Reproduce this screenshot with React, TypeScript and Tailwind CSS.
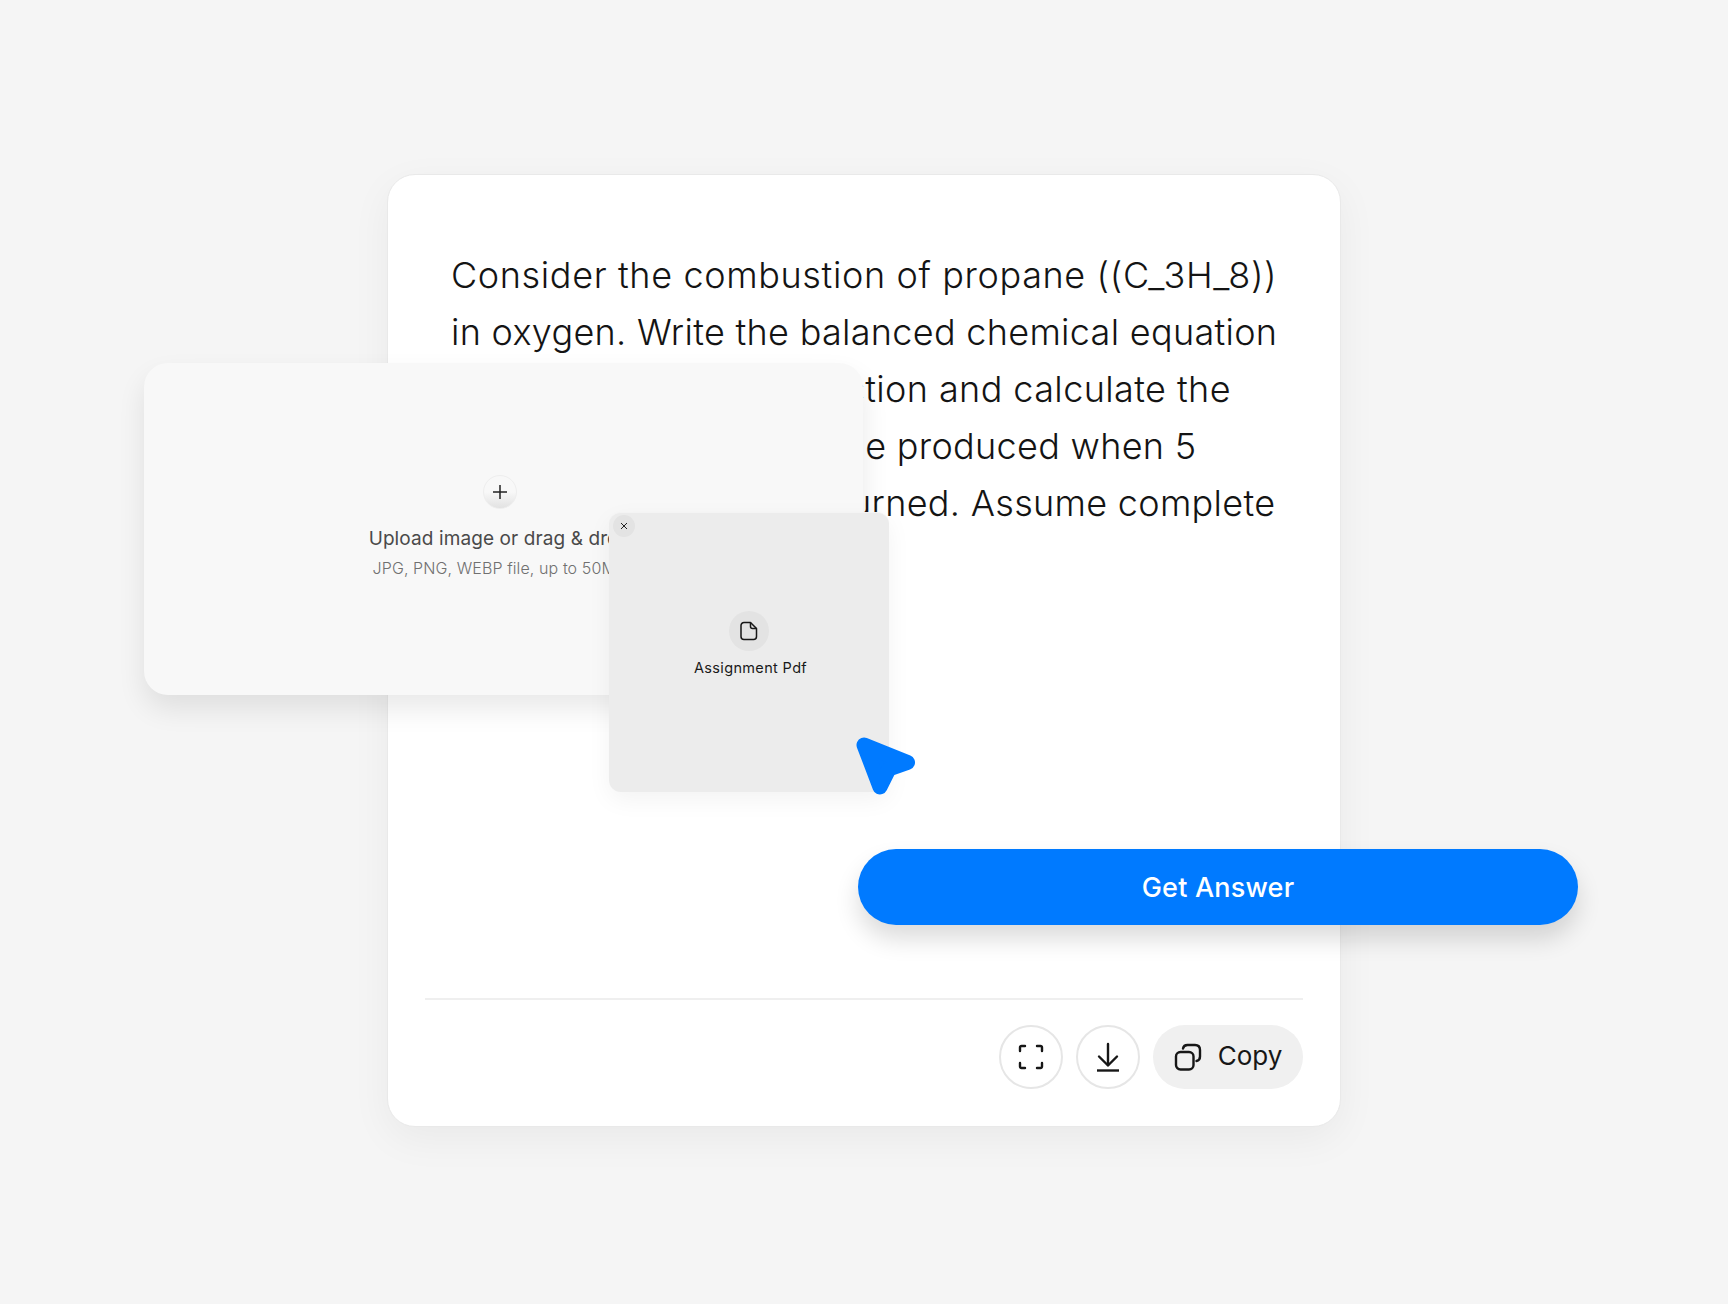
import React from "react";

const inter = "font-['Inter','Liberation_Sans',sans-serif]";

export default function App() {
  return (
    <div className={`w-full h-[1304px] bg-[#f5f5f5] flex justify-center items-start pt-[174px] overflow-hidden ${inter}`}>
      <div className="relative w-[954px] h-[953px] bg-white rounded-[28px] border border-[#e9e9e9] shadow-[0_12px_40px_rgba(0,0,0,0.05)] flex flex-col justify-between">
        <div className="pt-[72px] pl-[63px] text-[36px] leading-[57px] font-light tracking-[0.3px] text-[#141414] whitespace-nowrap">
          <p className="tracking-[0.63px]">Consider the combustion of propane ((C_3H_8))</p>
          <p>in oxygen. Write the balanced chemical equation</p>
          <p className="tracking-[0.4px]">for this combustion reaction and calculate the</p>
          <p>amount of carbon dioxide produced when 5</p>
          <p>grams of propane are burned. Assume complete</p>
        </div>

        <div className="mx-[37px] mb-[37px] border-t-2 border-[#efefef] pt-[25px] flex justify-end gap-[13px]">
          <button className="w-[64px] h-[64px] rounded-full border-2 border-[#e6e6e6] flex items-center justify-center">
            <svg width="28" height="28" viewBox="0 0 28 28" fill="none" stroke="#171717" strokeWidth="2.4" strokeLinecap="round" strokeLinejoin="round">
              <path d="M8 3H4.5A1.5 1.5 0 0 0 3 4.5V8" />
              <path d="M20 3h3.5A1.5 1.5 0 0 1 25 4.5V8" />
              <path d="M3 20v3.500A1.500 1.500 0 0 0 4.500 25H8" />
              <path d="M25 20v3.500A1.500 1.500 0 0 1 23.500 25H20" />
            </svg>
          </button>
          <button className="w-[64px] h-[64px] rounded-full border-2 border-[#e6e6e6] flex items-center justify-center">
            <svg width="28" height="30" viewBox="0 0 28 30" fill="none" stroke="#171717" strokeWidth="2.4" strokeLinecap="round" strokeLinejoin="round">
              <path d="M14 2v21" />
              <path d="M5 14.500l9 9 9-9" />
              <path d="M3 28.500h22" strokeLinecap="butt" />
            </svg>
          </button>
          <button className="w-[150px] h-[64px] rounded-full bg-[#f0f0f0] flex items-center justify-center gap-[16px] text-[26px] leading-[60px] pb-[2px] font-normal text-[#171717]">
            <svg className="mt-[2px]" width="28" height="28" viewBox="0 0 28 28" fill="none" stroke="#171717" strokeWidth="2.400" strokeLinecap="round" strokeLinejoin="round">
              <rect x="2" y="9" width="17.500" height="17.500" rx="4.500" />
              <path d="M9 5.500C9.500 3 11 2 13.500 2h7.500C24 2 26 4 26 7v6.500c0 2.500-1 4-3.500 4.500" />
            </svg>
            Copy
          </button>
        </div>

        {/* upload card */}
        <div className="absolute left-[-244px] top-[188px] w-[719px] h-[332px] bg-[#f8f8f8] rounded-[24px] shadow-[0_14px_28px_rgba(0,0,0,0.09)] flex flex-col items-center pt-[112px] pr-[8px]">
          <div className="w-[34px] h-[34px] rounded-full bg-[linear-gradient(#f8f8f8_50%,#e2e2e2)] border border-[#eeeeee] flex items-center justify-center">
            <svg width="16" height="16" viewBox="0 0 16 16" stroke="#222" strokeWidth="1.500">
              <path d="M8 1v14M1 8h14" />
            </svg>
          </div>
          <p className="mt-[17px] text-[19px] leading-[26px] tracking-[0.1px] font-normal text-[#4a4a4a] whitespace-nowrap">Upload image or drag &amp; drop</p>
          <p className="mt-[5px] text-[16px] leading-[22px] tracking-[0.1px] font-light text-[#707070] whitespace-nowrap">JPG, PNG, WEBP file, up to 50MB</p>
        </div>

        {/* file card */}
        <div className="absolute left-[221px] top-[337px] w-[280px] h-[280px] bg-[#ececec] rounded-[12px] border-t border-[#f4f4f4] shadow-[0_8px_24px_rgba(0,0,0,0.05)] flex flex-col items-center pt-[98px]">
          <div className="absolute left-[4px] top-[2px] w-[22px] h-[22px] rounded-full bg-[#e3e3e3] flex items-center justify-center">
            <svg width="8" height="8" viewBox="0 0 8 8" stroke="#222" strokeWidth="1">
              <path d="M1 1l6 6M7 1L1 7" />
            </svg>
          </div>
          <div className="w-[40px] h-[40px] rounded-full bg-[#e3e3e3] flex items-center justify-center">
            <svg width="18" height="20" viewBox="0 0 18 20" fill="none" stroke="#171717" strokeWidth="1.500" strokeLinejoin="round">
              <path d="M4 1.500h6.500L16.500 7.500V15.500a3 3 0 0 1-3 3H4a3 3 0 0 1-3-3V4.500a3 3 0 0 1 3-3z" />
              <path d="M10.500 1.500V5.500a2 2 0 0 0 2 2h4" />
            </svg>
          </div>
          <p className="mt-[7px] ml-[3px] text-[14.500px] leading-[20px] tracking-[0.35px] text-[#1a1a1a] whitespace-nowrap">Assignment Pdf</p>
        </div>

        {/* cursor */}
        <svg className="absolute left-[467px] top-[561px]" width="62" height="62" viewBox="0 0 62 62">
          <path d="M9 9L52.500 26.500L34 33L25 51Z" fill="#007aff" stroke="#007aff" strokeWidth="15" strokeLinejoin="round" />
        </svg>

        {/* get answer */}
        <button className="absolute left-[470px] top-[674px] w-[720px] h-[76px] pt-[2px] rounded-full bg-[#007aff] text-white text-[27px] font-medium tracking-[0.2px] shadow-[0_14px_24px_rgba(0,0,0,0.14)]">
          Get Answer
        </button>
      </div>
    </div>
  );
}
